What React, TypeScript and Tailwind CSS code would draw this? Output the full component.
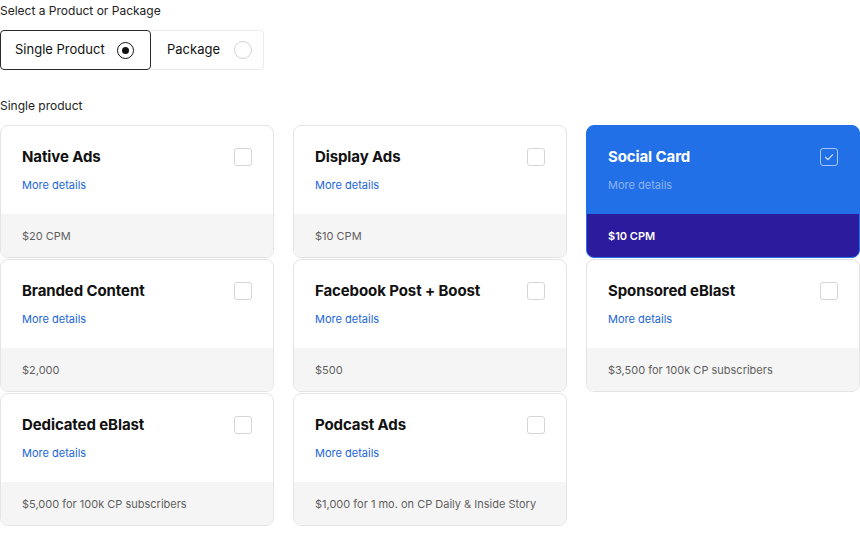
import React from "react";

type Item = { title: string; price: string; selected?: boolean };

const items: Item[] = [
  { title: "Native Ads", price: "$20 CPM" },
  { title: "Display Ads", price: "$10 CPM" },
  { title: "Social Card", price: "$10 CPM", selected: true },
  { title: "Branded Content", price: "$2,000" },
  { title: "Facebook Post + Boost", price: "$500" },
  { title: "Sponsored eBlast", price: "$3,500 for 100k CP subscribers" },
  { title: "Dedicated eBlast", price: "$5,000 for 100k CP subscribers" },
  { title: "Podcast Ads", price: "$1,000 for 1 mo. on CP Daily & Inside Story" },
];

function Card({ item }: { item: Item }) {
  const sel = !!item.selected;
  return (
    <div
      className={
        "flex h-[133px] flex-col overflow-hidden rounded-[8px] border " +
        (sel ? "border-[#2270e8] bg-[#2270e8]" : "border-[#e4e4e4] bg-white")
      }
    >
      <div className="flex flex-1 items-start justify-between pl-[21px] pr-[21px] pt-[21px]">
        <div className="flex flex-col">
          <div
            className={
              "text-[15px] font-bold leading-[20px] tracking-[-0.1px] " +
              (sel ? "text-white" : "text-[#111]")
            }
          >
            {item.title}
          </div>
          <div
            className={
              "mt-[10px] text-[11px] leading-[16px] " +
              (sel ? "text-[#8db3f2]" : "text-[#1a66d8]")
            }
          >
            More details
          </div>
        </div>
        <div
          className={
            "mt-[1px] flex h-[18px] w-[18px] items-center justify-center rounded-[3px] border " +
            (sel ? "border-[#a9c6f5]" : "border-[#d6d6d6] bg-white")
          }
        >
          {sel && (
            <svg width="12" height="12" viewBox="0 0 12 12" fill="none">
              <path d="M2.5 6.2 L5 8.6 L9.6 3.6" stroke="#d6e4fb" strokeWidth="1.2" strokeLinecap="round" strokeLinejoin="round" />
            </svg>
          )}
        </div>
      </div>
      <div
        className={
          "flex h-[43px] items-center whitespace-nowrap px-[21px] text-[11px] leading-[16px] " +
          (sel ? "bg-[#2c1b9d] font-semibold text-white" : "bg-[#f5f5f5] text-[#5f5f5f]")
        }
      >
        {item.price}
      </div>
    </div>
  );
}

export default function App() {
  return (
    <div
      className="h-[543px] w-[860px] bg-white text-[#111]"
      style={{ fontFamily: "Inter, 'Noto Sans', sans-serif" }}
    >
      <div className="pt-[3px] text-[12px] leading-[16px] text-[#222]">Select a Product or Package</div>
      <div className="mt-[11px] flex">
        <div className="flex h-[40px] w-[151px] items-center gap-[12px] rounded-[4px] border border-[#2a2a2a] pl-[14px]">
          <span className="text-[13px] text-[#111]">Single Product</span>
          <span className="flex h-[17px] w-[17px] items-center justify-center rounded-full border-[1.5px] border-[#111]">
            <span className="h-[7px] w-[7px] rounded-full bg-[#111]" />
          </span>
        </div>
        <div className="flex h-[40px] w-[113px] items-center gap-[14px] rounded-r-[4px] border border-l-0 border-[#ececec] pl-[16px]">
          <span className="text-[13px] text-[#111]">Package</span>
          <span className="h-[18px] w-[18px] rounded-full border border-[#d4d4d4]" />
        </div>
      </div>
      <div className="mt-[28px] text-[12px] leading-[16px] text-[#222]">Single product</div>
      <div className="mt-[11px] grid grid-cols-3 gap-x-[19px] gap-y-[1px]">
        {items.map((it) => (
          <Card key={it.title} item={it} />
        ))}
      </div>
    </div>
  );
}
